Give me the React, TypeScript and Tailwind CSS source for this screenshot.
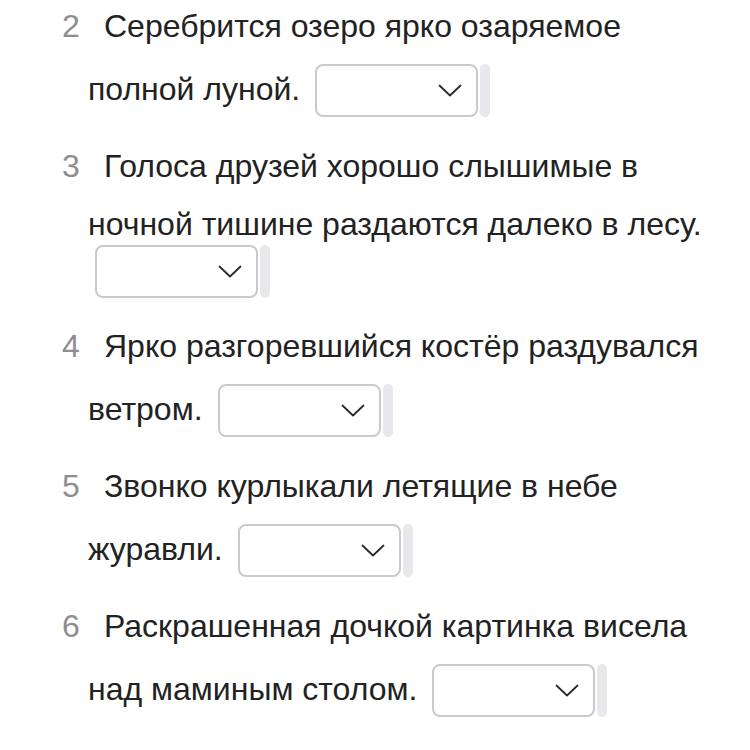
import React from "react";

const items: { n: number; text: string; own?: boolean }[] = [
  { n: 2, text: "Серебрится озеро ярко озаряемое полной луной." },
  { n: 3, text: "Голоса друзей хорошо слышимые в ночной тишине раздаются далеко в лесу.", own: true },
  { n: 4, text: "Ярко разгоревшийся костёр раздувался ветром." },
  { n: 5, text: "Звонко курлыкали летящие в небе журавли." },
  { n: 6, text: "Раскрашенная дочкой картинка висела над маминым столом." },
];

function SelectBox() {
  return (
    <div className="flex items-start gap-[2px]">
      <div className="flex items-center justify-end w-[163px] h-[53px] border-2 border-[#cacaca] rounded-[8px] bg-white pr-[14px]">
        <svg width="24" height="13" viewBox="0 0 24 13" fill="none">
          <path d="M1.5 1.5 L12 11.5 L22.5 1.5" stroke="#2a2a2a" strokeWidth="1.8" strokeLinecap="round" strokeLinejoin="round" />
        </svg>
      </div>
      <div className="w-[10px] h-[53px] rounded-[5px] bg-[#e8e8ec]" />
    </div>
  );
}

export default function App() {
  return (
    <div
      className="w-[750px] h-[750px] bg-white overflow-hidden pr-[35px]"
      style={{ fontFamily: '"Liberation Sans", Arial, sans-serif' }}
    >
      <div className="-mt-[3px]">
        {items.map((it) => (
          <div key={it.n} className="pl-[88px] mb-[19px]">
            <p className="-indent-[26px] text-[32px] leading-[58px] text-[#222222]">
              <span className="inline-block indent-0 w-[42px] text-[#8e8e8e]">{it.n}</span>
              {it.text}
              {!it.own && (
                <span className="inline-block indent-0 align-baseline overflow-hidden ml-[15px] mt-[9px] -mb-[17px]">
                  <SelectBox />
                </span>
              )}
            </p>
            {it.own && (
              <div className="ml-[7px] -mt-[8px]">
                <SelectBox />
              </div>
            )}
          </div>
        ))}
      </div>
    </div>
  );
}
